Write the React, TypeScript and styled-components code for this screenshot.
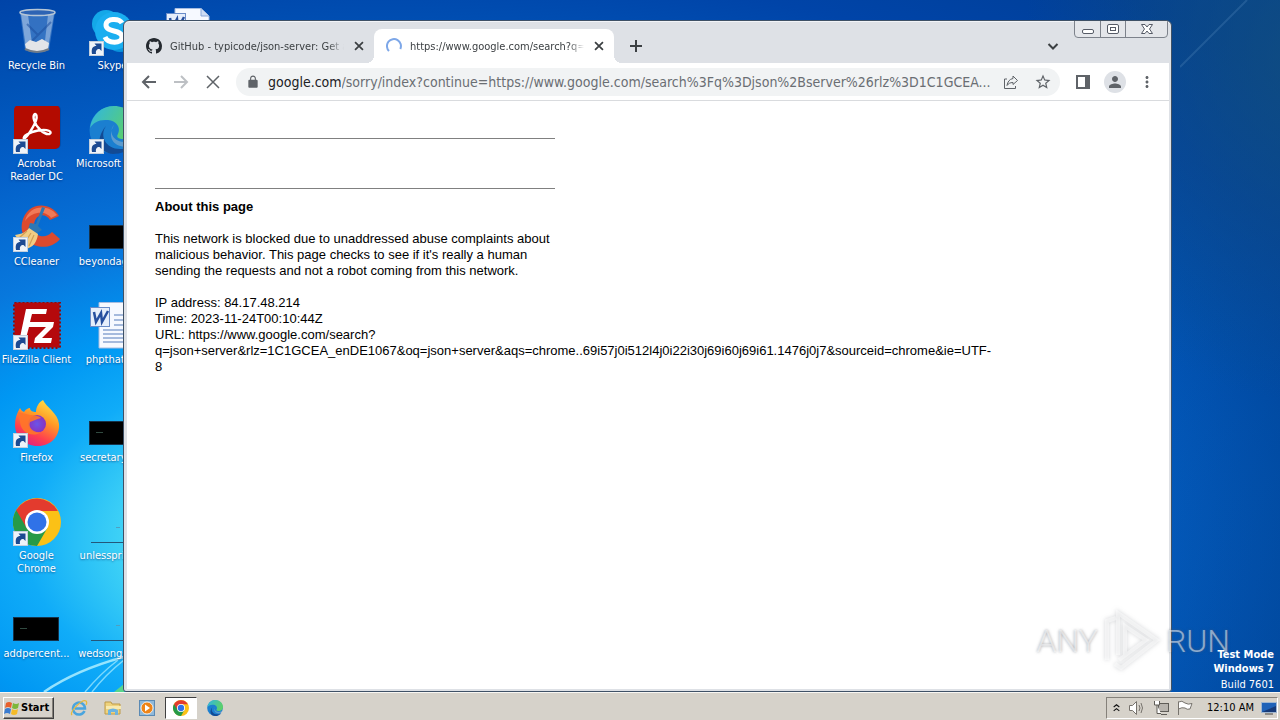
import React from "react";
import styled, { createGlobalStyle, css } from "styled-components";

const ui = `"DejaVu Sans Condensed", "DejaVu Sans", sans-serif`;

const GlobalStyle = createGlobalStyle`
  * { box-sizing: border-box; }
  body { margin: 0; font-family: ${ui}; font-size: 11px; }
  button { font: inherit; color: inherit; border: 0; padding: 0; background: none; }
  svg { display: block; flex: none; }
`;

const Screen = styled.div`
  display: flex;
  flex-direction: column;
  height: 100vh;
  overflow: hidden;
`;

const Desktop = styled.main`
  position: relative;
  flex: 1;
  min-height: 0;
  overflow: hidden;
  background:
    radial-gradient(ellipse 22% 50% at 102% 8%, rgba(20, 80, 125, 0.75), transparent 100%),
    linear-gradient(100deg, transparent 78%, rgba(4, 60, 120, 0.35) 100%),
    radial-gradient(ellipse 78% 78% at 30% 78%, #6ee8f8 0%, #3fd2f6 26%, #10acf8 36%, #0097f3 46%, #0878dd 59%, #035fc8 78%, #0052b6 92%, #0044a8 107%, #003f98 125%);
`;

const Rays = styled.svg`
  position: absolute;
  left: 0;
  bottom: 0;
`;

const SkyRay = styled(Rays)`
  left: auto;
  right: 0;
  top: 0;
`;

const IconGrid = styled.div`
  position: relative;
  display: flex;
  align-items: flex-start;
  padding-top: 8px;
`;

const IconColumn = styled.div`
  width: 76px;
  flex: none;
`;

const Shortcut = styled.button`
  display: flex;
  flex-direction: column;
  align-items: center;
  gap: 3px;
  width: 73px;
  height: 98px;
  color: #fff;
  line-height: 13px;
  text-shadow: 0 1px 2px rgba(0, 20, 80, 0.5);
`;

const ShortcutLabel = styled.span<{ $wrap?: boolean }>`
  white-space: ${(p) => (p.$wrap ? "normal" : "nowrap")};
`;

const Window = styled.section`
  position: absolute;
  top: 20px;
  left: 123px;
  right: 108px;
  bottom: 0;
  display: flex;
  flex-direction: column;
  padding: 1px 2px 2px 3px;
  border: 1px solid #3f5166;
  border-radius: 6px 6px 3px 3px;
  background: #dee1e6;
  overflow: hidden;
  box-shadow: inset 0 1px 0 #f2f4f8;
`;

const Caption = styled.header`
  position: relative;
  display: flex;
  align-items: flex-end;
  height: 41px;
  flex: none;
  padding-left: 7px;
`;

const Tab = styled.div<{ $active?: boolean }>`
  position: relative;
  display: flex;
  align-items: center;
  width: 240px;
  height: 34px;
  padding: 0 8px 0 12px;
  gap: 8px;
  color: #3c4043;
  border-radius: 8px 8px 0 0;
  ${(p) =>
    p.$active &&
    css`
      background: #fff;
      &::before,
      &::after {
        content: "";
        position: absolute;
        bottom: 0;
        width: 8px;
        height: 8px;
      }
      &::before {
        left: -8px;
        background: radial-gradient(circle at 0 0, transparent 8px, #fff 8px);
      }
      &::after {
        right: -8px;
        background: radial-gradient(circle at 100% 0, transparent 8px, #fff 8px);
      }
    `}
`;

const TabTitle = styled.span`
  flex: 1;
  overflow: hidden;
  white-space: nowrap;
  mask-image: linear-gradient(to right, #000 91%, transparent);
`;

const StripButton = styled.button`
  display: grid;
  place-items: center;
  width: 28px;
  height: 34px;
  margin-left: 8px;
`;

const TabSearch = styled(StripButton)`
  margin: 0 102px 0 auto;
`;

const WindowButtons = styled.div`
  position: absolute;
  top: -2px;
  right: 1px;
  display: flex;
  height: 18px;
  border: 1px solid #7d828b;
  border-radius: 0 0 4px 4px;
  background: #e4e6ea;
`;

const WindowButton = styled.button<{ $wide?: boolean }>`
  display: grid;
  place-items: center;
  width: ${(p) => (p.$wide ? 42 : 25)}px;
  & + & {
    border-left: 1px solid #7d828b;
  }
`;

const Toolbar = styled.div`
  display: flex;
  align-items: center;
  height: 38px;
  flex: none;
  background: #fff;
  border-bottom: 1px solid #d9dbde;
  padding: 0 6px;
`;

const ToolButton = styled.button`
  display: grid;
  place-items: center;
  width: 32px;
  height: 28px;
  flex: none;
`;

const Omnibox = styled.label`
  display: flex;
  align-items: center;
  flex: 1;
  min-width: 0;
  height: 28px;
  margin: 0 7px;
  padding: 0 1px 0 10px;
  border-radius: 14px;
  background: #f1f3f4;
  font-size: 14px;
  color: #202124;
`;

const Host = styled.span`
  margin-left: 8px;
`;

const Address = styled.input`
  flex: 1;
  min-width: 0;
  border: 0;
  padding: 0;
  outline: 0;
  background: none;
  font: inherit;
  color: #6a6e73;
`;

const Avatar = styled.span`
  display: grid;
  place-items: center;
  width: 22px;
  height: 22px;
  border-radius: 50%;
  background: #dee1e6;
`;

const Page = styled.article`
  flex: 1;
  min-height: 0;
  overflow: hidden;
  padding: 37px 28px 0;
  background: #fff;
  color: #000;
  font: 13px/16px "Liberation Sans", Arial, sans-serif;
`;

const Rule = styled.hr`
  width: 400px;
  height: 1px;
  margin: 0 0 49px;
  border: 0;
  background: #808080;
  &:nth-of-type(2) {
    margin-bottom: 10px;
  }
`;

const PageTitle = styled.h1`
  margin: 0 0 16px;
  font-size: 13px;
  line-height: 16px;
`;

const Paragraph = styled.p<{ $narrow?: boolean }>`
  max-width: ${(p) => (p.$narrow ? "400px" : "none")};
  margin: 0 0 16px;
`;

const Watermark = styled.div`
  position: absolute;
  right: 50px;
  bottom: 18px;
  display: flex;
  align-items: center;
  gap: 5px;
  height: 66px;
  color: rgba(255, 255, 255, 0.5);
  font: 300 32px/66px Roboto, "Liberation Sans", sans-serif;
  text-shadow: 0 0 3px rgba(90, 95, 105, 0.6);
  svg {
    filter: drop-shadow(0 0 2px rgba(90, 95, 105, 0.5));
  }
`;

const Build = styled.div`
  position: absolute;
  right: 6px;
  bottom: 0;
  color: #fff;
  font-weight: bold;
  line-height: 14px;
  text-align: right;
  small {
    display: block;
    margin-top: 2px;
    font-size: 11px;
    font-weight: normal;
  }
`;

const Taskbar = styled.footer`
  display: flex;
  align-items: center;
  flex: none;
  height: 28px;
  padding: 2px 2px 0 3px;
  border-top: 1px solid #f8f6f2;
  background: #d6d2ca;
`;

const StartButton = styled.button`
  display: flex;
  align-items: center;
  gap: 1px;
  width: 51px;
  height: 22px;
  margin-right: 9px;
  border: 1px solid;
  border-color: #fff #404040 #404040 #fff;
  box-shadow: inset -1px -1px 0 #85817a;
  font-size: 11px;
  font-weight: bold;
`;

const TaskButton = styled.button<{ $active?: boolean }>`
  display: grid;
  place-items: center;
  width: 32px;
  height: 22px;
  margin-right: 2px;
  ${(p) =>
    p.$active &&
    css`
      border: 1px solid;
      border-color: #404040 #fff #fff #404040;
      background: #fff;
    `}
`;

const Tray = styled.div`
  display: flex;
  align-items: center;
  gap: 7px;
  height: 22px;
  margin-left: auto;
  padding: 0 0 0 5px;
  border: 1px solid;
  border-color: #85817a #fff #fff #85817a;
`;

const Clock = styled.time`
  margin: 0 0 0 7px;
`;

const Arrow = () => (
  <g>
    <rect x="0.5" y="33.5" width="14" height="14" fill="#eef3f9" stroke="#c3cfdd" />
    <path d="M3 46 C2 40 4 38 7.500 38 L5.500 35.500 H12.500 V43 L10.500 41 C7.500 41 6.500 43 7 46 Z" fill="#1c4a92" />
  </g>
);

const Art = ({ children }: { children: React.ReactNode }) => (
  <svg width="48" height="48" viewBox="0 0 48 48" aria-hidden="true">{children}</svg>
);

const BinIcon = () => (
  <Art>
    <path d="M7 4 L12 42 Q24 48 36 42 L42 4 Z" fill="#7faee0" fillOpacity=".4" />
    <path d="M8 6 L13 40 L20 42 L15 7 Z" fill="#c9dcf2" fillOpacity=".5" />
    <path d="M41 6 L35 40 L31 41 L35 7 Z" fill="#c9dcf2" fillOpacity=".45" />
    <path d="M14 16 L25 27 L38 14 M18 34 L25 27" stroke="#1d4f9e" strokeWidth="2" fill="none" opacity=".55" />
    <path d="M12 36 L17 32 L23 34 L29 31 L36 35 L35 41 Q24 46 13 41 Z" fill="#e3e5e8" />
    <ellipse cx="24.500" cy="4.500" rx="17.500" ry="3" fill="#2e64b4" stroke="#b6c6d6" strokeWidth="1.500" />
    <path d="M12 41 Q24 47 36 41" stroke="#707b88" strokeWidth="2" fill="none" />
  </Art>
);

const AcrobatIcon = () => (
  <Art>
    <rect x="2" y="-1" width="46" height="44" rx="5" fill="#06357e" opacity=".35" />
    <rect x="1" y="-1" width="46" height="44" rx="5" fill="#b30b00" />
    <path d="M11 33 C15 30 25 15 23.500 9.500 C22.500 6 19.500 9 21 14 C23 21 31 29 36.500 28 C40 26 35 22.500 25 24.500 C17 26 9 30 11 33 Z" stroke="#fff" strokeWidth="2.400" fill="none" strokeLinejoin="round" />
    <Arrow />
  </Art>
);

const CCleanerIcon = () => (
  <Art>
    <path d="M46 12 C38 -3 13 -3 9 19 C5 41 34 51 47 35 L39 28 C31 37 19 31 21 20 C23 9 33 9 37 16 Z" fill="#dc4a2e" />
    <path d="M44 11 C36 0 16 0 12 17 C20 6 34 7 38 14 Z" fill="#f07a58" />
    <path d="M29 3 L32 4 L25 22 L29 26 L21 31 L15 26 L17 19 L23 20 Z" fill="#2c78b5" />
    <path d="M16 24 L25 30 C24 38 20 44 12 45 L2 31 C9 30 13 28 16 24 Z" fill="#f1cc83" />
    <path d="M14 27 L6 34 M18 29 L11 40 M21 31 L16 42" stroke="#cf9f54" strokeWidth="1.200" />
    <Arrow />
  </Art>
);

const FileZillaIcon = () => (
  <Art>
    <rect x="1.500" y="0.500" width="45" height="45" fill="#b30a0c" stroke="#8f090b" strokeWidth="3" strokeDasharray="2 2" />
    <rect x="2" y="1" width="44" height="44" fill="#b5090c" />
    <path d="M13 7 H34 L33 12 H19 L17 20 H28 L27 25 H16 L12 40 H6 Z M26 20 H41 L40 25 L29 36 H39 L38 41 H21 L22 36 L33 25 H25 Z" fill="#fff" />
    <Arrow />
  </Art>
);

const FirefoxIcon = () => (
  <Art>
    <defs>
      <linearGradient id="fox" x1=".8" y1="0" x2=".3" y2="1">
        <stop offset="0" stopColor="#ffe54a" /><stop offset=".4" stopColor="#ff9a25" /><stop offset=".75" stopColor="#ff3f4f" /><stop offset="1" stopColor="#e02080" />
      </linearGradient>
      <radialGradient id="globe"><stop offset="0" stopColor="#6a55e8" /><stop offset="1" stopColor="#8a32c0" /></radialGradient>
    </defs>
    <path d="M30 0 C33 7 45 13 46 24 C47 36 38 46 25 46 C11 46 2 36 2 25 C2 18 4 13 7 8 C8 10 9 11 11 12 C13 9 15 8 17 8 C17 11 20 12 23 12 C23 7 26 2 30 0 Z" fill="url(#fox)" />
    <circle cx="24" cy="24" r="9" fill="url(#globe)" />
    <path d="M5 12 C9 13 13 14 17 15 C21 15 27 16 28 18 C23 19 21 21 17 22 C15 28 20 33 28 32 C20 38 8 33 7 22 Z" fill="#ff7629" opacity=".9" />
    <Arrow />
  </Art>
);

const ChromeArt = () => (
  <g>
    <circle cx="24" cy="24" r="24" fill="#fbc116" />
    <path d="M24 24 L3.200 12 A24 24 0 0 0 24 48 L34.400 30 Z" fill="#269a48" />
    <path d="M24 13 H44.800 A24 24 0 0 0 3.200 12 L13.600 30 L24 24 Z" fill="#e33b2e" />
    <circle cx="24" cy="24" r="12" fill="#fff" />
    <circle cx="24" cy="24" r="9.500" fill="#3072e8" />
  </g>
);

const ChromeIcon = () => <Art><ChromeArt /><Arrow /></Art>;

const SkypeIcon = () => (
  <Art>
    <circle cx="17" cy="16" r="14" fill="#14a8e8" />
    <circle cx="31" cy="30" r="14" fill="#0a93dc" />
    <circle cx="25" cy="23" r="19" fill="#1aaef0" />
    <path d="M33 15 C30 10 17 10 17 17 C17 25 33 21 33 29 C33 36 19 36 16 29" stroke="#fff" strokeWidth="5" fill="none" />
    <Arrow />
  </Art>
);

const EdgeArt = () => (
  <g>
    <defs>
      <linearGradient id="edgeTop" x1="0" y1="0" x2="1" y2=".4"><stop offset="0" stopColor="#2fb5e6" /><stop offset="1" stopColor="#5cd06a" /></linearGradient>
    </defs>
    <circle cx="24" cy="24" r="23.500" fill="#1b7fd0" />
    <path d="M1 22 C3 8 13 0 25 0 C38 0 48 9 48 21 C48 29 42 33 35 33 C29 33 27 31 29 28 C33 19 24 13 16 14 C9 14 4 17 1 22 Z" fill="url(#edgeTop)" />
    <path d="M17 20 C10 30 17 43 31 43 C37 43 41 41 44 38 C39 45 32 48 24 48 C11 47 5 34 17 20 Z" fill="#124a94" />
    <path d="M25 19 C20 24 22 35 35 36 C40 36 44 34 46 31 L48 38 L40 40 C26 43 17 32 25 19 Z" fill="#d6d2ca" opacity=".35" />
  </g>
);

const EdgeIcon = () => <Art><EdgeArt /><Arrow /></Art>;

const ConsoleIcon = ({ mark }: { mark?: boolean }) => (
  <Art>
    <rect x="0.500" y="21.500" width="45" height="23" fill="#000" stroke="#16324a" />
    {mark && <path d="M7 32.500 H14" stroke="#314a40" />}
  </Art>
);

const LineIcon = () => (
  <Art>
    <path d="M2 44.500 H48" stroke="#24577a" />
    <path d="M27 29.500 H31" stroke="#4f9fc0" />
  </Art>
);

const WordIcon = () => (
  <Art>
    <path d="M10 0.500 H36 L44 8 V46 H10 Z" fill="#f6f9ff" stroke="#a7bde0" />
    <path d="M36 0.500 V8 H44" fill="#cddcf4" stroke="#8ba8d8" />
    <path d="M25 13 H42 M25 18 H42 M25 23 H42 M14 28 H42 M14 32 H42 M14 36 H42 M14 40 H42" stroke="#8ba5d2" strokeWidth="1.500" />
    <rect x="1.500" y="5.500" width="19" height="19" fill="#e6eefb" stroke="#6a8cc8" />
    <path d="M5 10 L7 20 L12 11 L13 20 L19 9" stroke="#264f9f" strokeWidth="2.500" fill="none" />
  </Art>
);

const StrokeIcon = ({ d, size = 16, color = "#5f6368", width = 2 }: { d: string; size?: number; color?: string; width?: number }) => (
  <svg width={size} height={size} viewBox="0 0 16 16" fill="none" stroke={color} strokeWidth={width} aria-hidden="true"><path d={d} /></svg>
);

const MaterialIcon = ({ d, size = 18, color = "#5f6368" }: { d: string; size?: number; color?: string }) => (
  <svg width={size} height={size} viewBox="0 0 24 24" fill={color} aria-hidden="true"><path d={d} /></svg>
);

const CROSS = "M3.500 3.500 L12.500 12.500 M12.500 3.500 L3.500 12.500";

const columns = [
  [
    { label: "Recycle Bin", icon: <BinIcon /> },
    { label: "Acrobat Reader DC", icon: <AcrobatIcon />, wrap: true },
    { label: "CCleaner", icon: <CCleanerIcon /> },
    { label: "FileZilla Client", icon: <FileZillaIcon /> },
    { label: "Firefox", icon: <FirefoxIcon /> },
    { label: "Google Chrome", icon: <ChromeIcon />, wrap: true },
    { label: "addpercent...", icon: <ConsoleIcon mark /> },
  ],
  [
    { label: "Skype", icon: <SkypeIcon /> },
    { label: "Microsoft Edge", icon: <EdgeIcon /> },
    { label: "beyondagai...", icon: <ConsoleIcon /> },
    { label: "phpthat.rtf", icon: <WordIcon /> },
    { label: "secretaryin...", icon: <ConsoleIcon mark /> },
    { label: "unlessprice...", icon: <LineIcon /> },
    { label: "wedsongsre...", icon: <LineIcon /> },
  ],
  [{ label: "", icon: <WordIcon /> }],
];

const Browser = () => (
  <Window aria-label="Browser">
    <Caption>
      <Tab>
        <svg width="16" height="16" viewBox="0 0 16 16" fill="#24292f" aria-hidden="true">
          <path d="M8 0C3.580 0 0 3.580 0 8c0 3.540 2.290 6.530 5.470 7.590.4.070.55-.17.55-.38 0-.19-.01-.82-.01-1.490-2.010.37-2.530-.49-2.690-.94-.09-.23-.48-.94-.82-1.130-.28-.15-.68-.52-.01-.53.63-.01 1.080.58 1.230.82.72 1.210 1.870.87 2.330.66.070-.52.28-.87.51-1.070-1.780-.2-3.640-.89-3.640-3.950 0-.87.31-1.590.82-2.150-.08-.2-.36-1.020.08-2.120 0 0 .67-.21 2.200.82.64-.18 1.320-.27 2-.27.68 0 1.360.09 2 .27 1.530-1.040 2.200-.82 2.200-.82.44 1.100.16 1.920.08 2.120.51.56.82 1.270.82 2.150 0 3.070-1.870 3.750-3.650 3.950.29.25.54.73.54 1.480 0 1.070-.01 1.930-.01 2.200 0 .21.15.46.55.38A8.013 8.013 0 0 0 16 8c0-4.420-3.580-8-8-8z" />
        </svg>
        <TabTitle>GitHub - typicode/json-server: Get a</TabTitle>
        <button aria-label="Close tab"><StrokeIcon d={CROSS} size={14} color="#3c4043" /></button>
      </Tab>
      <Tab $active>
        <StrokeIcon d="M3 13 A7 7 0 1 1 14.300 11" color="#7da7e8" />
        <TabTitle>https://www.google.com/search?q=</TabTitle>
        <button aria-label="Close tab"><StrokeIcon d={CROSS} size={14} color="#3c4043" /></button>
      </Tab>
      <StripButton aria-label="New tab"><StrokeIcon d="M8 2 V14 M2 8 H14" color="#3c4043" /></StripButton>
      <TabSearch aria-label="Search tabs"><StrokeIcon d="M3.500 6 L8 10.500 L12.500 6" color="#3c4043" /></TabSearch>
      <WindowButtons>
        <WindowButton aria-label="Minimize">
          <svg width="14" height="12" viewBox="0 0 14 12" fill="#fff" stroke="#565b66"><rect x="1.500" y="6.500" width="11" height="4" rx="1.500" /></svg>
        </WindowButton>
        <WindowButton aria-label="Maximize">
          <svg width="14" height="12" viewBox="0 0 14 12" fill="#fff" stroke="#565b66"><rect x="1.500" y="1.500" width="11" height="9" rx="1.500" /><rect x="4.500" y="4.500" width="5" height="3" /></svg>
        </WindowButton>
        <WindowButton aria-label="Close" $wide>
          <svg width="14" height="12" viewBox="0 0 14 12" fill="#fff" stroke="#565b66"><path d="M1.500 1.500 H5 L7 4 L9 1.500 H12.500 L9.500 6 L12.500 10.500 H9 L7 8 L5 10.500 H1.500 L4.500 6 Z" /></svg>
        </WindowButton>
      </WindowButtons>
    </Caption>
    <Toolbar>
      <ToolButton aria-label="Back"><StrokeIcon d="M15 8 H2.500 M8 2 L2 8 L8 14" /></ToolButton>
      <ToolButton aria-label="Forward"><StrokeIcon d="M1 8 H13.500 M8 2 L14 8 L8 14" color="#bdc0c4" /></ToolButton>
      <ToolButton aria-label="Stop"><StrokeIcon width={1.5} d="M2 2 L14 14 M14 2 L2 14" /></ToolButton>
      <Omnibox>
        <MaterialIcon size={14} d="M18 8h-1V6c0-2.760-2.240-5-5-5S7 3.240 7 6v2H6c-1.100 0-2 .9-2 2v10c0 1.100.9 2 2 2h12c1.100 0 2-.9 2-2V10c0-1.100-.9-2-2-2zM8.900 8V6c0-1.710 1.390-3.100 3.100-3.100s3.100 1.390 3.100 3.100v2z" />
        <Host>google.com</Host>
        <Address
          aria-label="Address"
          readOnly
          value="/sorry/index?continue=https://www.google.com/search%3Fq%3Djson%2Bserver%26rlz%3D1C1GCEA..."
        />
        <ToolButton aria-label="Share">
          <StrokeIcon width={1} d="M4 5 H1.500 V14.500 H12.500 V12 M10 2 L14.500 6.500 L10 10.500 V8.500 C7 8.500 5.500 9.500 4 11.500 C4.500 8 6.500 5 10 4.500 Z" />
        </ToolButton>
        <ToolButton aria-label="Bookmark">
          <MaterialIcon d="M22 9.240l-7.190-.62L12 2 9.190 8.630 2 9.240l5.460 4.730L5.820 21 12 17.270 18.180 21l-1.630-7.030L22 9.240zM12 15.400l-3.760 2.270 1-4.280-3.320-2.880 4.380-.38L12 6.100l1.710 4.040 4.380.38-3.320 2.880 1 4.280L12 15.400z" />
        </ToolButton>
      </Omnibox>
      <ToolButton aria-label="Side panel">
        <svg width="14" height="14" viewBox="0 0 14 14" fill="#5f6368"><path d="M0 0 H14 V14 H0 Z M2 2 V12 H9 V2 Z" fillRule="evenodd" /></svg>
      </ToolButton>
      <ToolButton aria-label="Profile">
        <Avatar><MaterialIcon d="M12 12c2.210 0 4-1.790 4-4s-1.790-4-4-4-4 1.790-4 4 1.790 4 4 4zm0 2c-2.670 0-8 1.340-8 4v2h16v-2c0-2.660-5.330-4-8-4z" /></Avatar>
      </ToolButton>
      <ToolButton aria-label="Menu">
        <MaterialIcon d="M12 8c1.100 0 2-.9 2-2s-.9-2-2-2-2 .9-2 2 .9 2 2 2zm0 2c-1.100 0-2 .9-2 2s.9 2 2 2 2-.9 2-2-.9-2-2-2zm0 6c-1.100 0-2 .9-2 2s.9 2 2 2 2-.9 2-2-.9-2-2-2z" />
      </ToolButton>
    </Toolbar>
    <Page>
      <Rule />
      <Rule />
      <PageTitle>About this page</PageTitle>
      <Paragraph $narrow>
        This network is blocked due to unaddressed abuse complaints about
        malicious behavior. This page checks to see if it's really a human
        sending the requests and not a robot coming from this network.
      </Paragraph>
      <Paragraph>
        IP address: 84.17.48.214<br />
        Time: 2023-11-24T00:10:44Z<br />
        URL: https://www.google.com/search?<br />
        q=json+server&amp;rlz=1C1GCEA_enDE1067&amp;oq=json+server&amp;aqs=chrome..69i57j0i512l4j0i22i30j69i60j69i61.1476j0j7&amp;sourceid=chrome&amp;ie=UTF-<br />
        8
      </Paragraph>
    </Page>
  </Window>
);

export default function App() {
  return (
    <Screen>
      <GlobalStyle />
      <Desktop>
        <Rays width="124" height="60" viewBox="0 0 124 60" fill="none" aria-hidden="true">
          <path d="M44 60 Q76 38 124 25" stroke="#b8f3ff" strokeWidth="2.500" opacity=".8" />
          <path d="M85 60 Q100 42 118 28 M92 60 Q106 42 124 28" stroke="#a8ecff" strokeWidth="1.500" opacity=".7" />
          <path d="M114 60 L124 52 V60 Z" fill="#59d68c" />
        </Rays>
        <SkyRay width="100" height="70" viewBox="0 0 100 70" fill="none" aria-hidden="true">
          <path d="M0 67 L67 0" stroke="#4a80b4" strokeWidth="2" opacity=".35" />
        </SkyRay>
        <IconGrid>
          {columns.map((items, i) => (
            <IconColumn key={i}>
              {items.map((item) => (
                <Shortcut key={item.label} aria-label={item.label || "Document"}>
                  {item.icon}
                  <ShortcutLabel $wrap={"wrap" in item}>{item.label}</ShortcutLabel>
                </Shortcut>
              ))}
            </IconColumn>
          ))}
        </IconGrid>
        <Browser />
        <Watermark>
          <span>ANY</span>
          <svg width="58" height="64" viewBox="0 0 58 64" fill="none" stroke="currentColor" strokeWidth="4" aria-hidden="true">
            <path d="M4 51 V12 L13 9" />
            <path d="M15 46 V4 L54 31 L18 59 L12 55" />
            <path d="M22 46 V17 L43 31 L16 51" />
          </svg>
          <span>RUN</span>
        </Watermark>
        <Build>
          Test Mode<br />Windows 7<small>Build 7601</small>
        </Build>
      </Desktop>
      <Taskbar>
        <StartButton>
          <svg width="16" height="16" viewBox="0 0 16 16" aria-hidden="true">
            <path d="M2 3 Q5 1 8 3 L7 8 Q4 6 1 8 Z" fill="#e8602c" />
            <path d="M9 3 Q12 5 15 3 L14 8 Q11 10 8 8 Z" fill="#7db73a" />
            <path d="M1 9 Q4 7 7 9 L6 14 Q3 12 0 14 Z" fill="#3a7cd0" />
            <path d="M8 9 Q11 11 14 9 L13 14 Q10 16 7 14 Z" fill="#f4bb28" />
          </svg>
          Start
        </StartButton>
        <TaskButton aria-label="Internet Explorer">
          <svg width="18" height="18" viewBox="0 0 18 18" fill="none" aria-hidden="true">
            <path d="M14.500 12 A6 6 0 1 1 15 9.500 H5" stroke="#4aa5de" strokeWidth="2.500" />
            <path d="M2 16 C-1 13 12 0 16 2 C17 3 17 4 16 6" stroke="#e6b93c" strokeWidth="1.300" />
          </svg>
        </TaskButton>
        <TaskButton aria-label="Explorer">
          <svg width="18" height="16" viewBox="0 0 18 16" aria-hidden="true">
            <path d="M1 2 H7 L8 4 H16 V14 H1 Z" fill="#eed27c" stroke="#bd9a48" />
            <path d="M2 6 H17 V9 H2 Z" fill="#f8eab0" />
            <path d="M4 15 V10 Q9 7 14 10 V15 H11 V12 H7 V15 Z" fill="#6db4e0" />
          </svg>
        </TaskButton>
        <TaskButton aria-label="Media Player">
          <svg width="16" height="16" viewBox="0 0 16 16" aria-hidden="true">
            <rect x="0.500" y="0.500" width="15" height="15" fill="#8fb9da" stroke="#5b8ab4" />
            <circle cx="8" cy="8" r="6" fill="#ee8418" stroke="#fff" strokeWidth=".8" />
            <path d="M6 4.500 L11 8 L6 11.500 Z" fill="#fff" />
          </svg>
        </TaskButton>
        <TaskButton aria-label="Google Chrome" $active>
          <svg width="16" height="16" viewBox="0 0 48 48" aria-hidden="true"><ChromeArt /></svg>
        </TaskButton>
        <TaskButton aria-label="Microsoft Edge">
          <svg width="16" height="16" viewBox="0 0 48 48" aria-hidden="true"><EdgeArt /></svg>
        </TaskButton>
        <Tray>
          <StrokeIcon size={9} color="#111" width={2} d="M3 7 L8 3 L13 7 M3 14 L8 10 L13 14" />
          <svg width="18" height="16" viewBox="0 0 18 16" fill="#fff" stroke="#77736d" aria-hidden="true">
            <path d="M1.500 5.500 H4.500 L8.500 1.500 V14.500 L4.500 10.500 H1.500 Z" /><path d="M11 5 Q13 8 11 11 M13 3 Q16 8 13 13" fill="none" />
          </svg>
          <svg width="17" height="16" viewBox="0 0 17 16" fill="#fff" stroke="#5f5c57" aria-hidden="true">
            <rect x="5.500" y="3.500" width="10" height="8" fill="#b8b4ae" /><path d="M8 14.500 H14 M1.500 1 V5 H6.500 V1 M4 5 V13.500 H8" />
          </svg>
          <svg width="16" height="16" viewBox="0 0 16 16" fill="#fff" stroke="#77736d" aria-hidden="true">
            <path d="M1.500 15 V1.500 M1.500 2 Q5 0 8 3 Q11 5 15 3.500 L13 9 Q10 10 8 8 Q5 7 1.500 9 Z" />
          </svg>
          <Clock>12:10 AM</Clock>
          <svg width="16" height="14" viewBox="0 0 16 14" aria-hidden="true">
            <rect x="0.500" y="1.500" width="15" height="10" fill="#1f62b8" stroke="#9fb6d0" /><path d="M1 11 L15 5 V11 Z" fill="#163a78" /><path d="M4 13 H12" stroke="#444" />
          </svg>
        </Tray>
      </Taskbar>
    </Screen>
  );
}
